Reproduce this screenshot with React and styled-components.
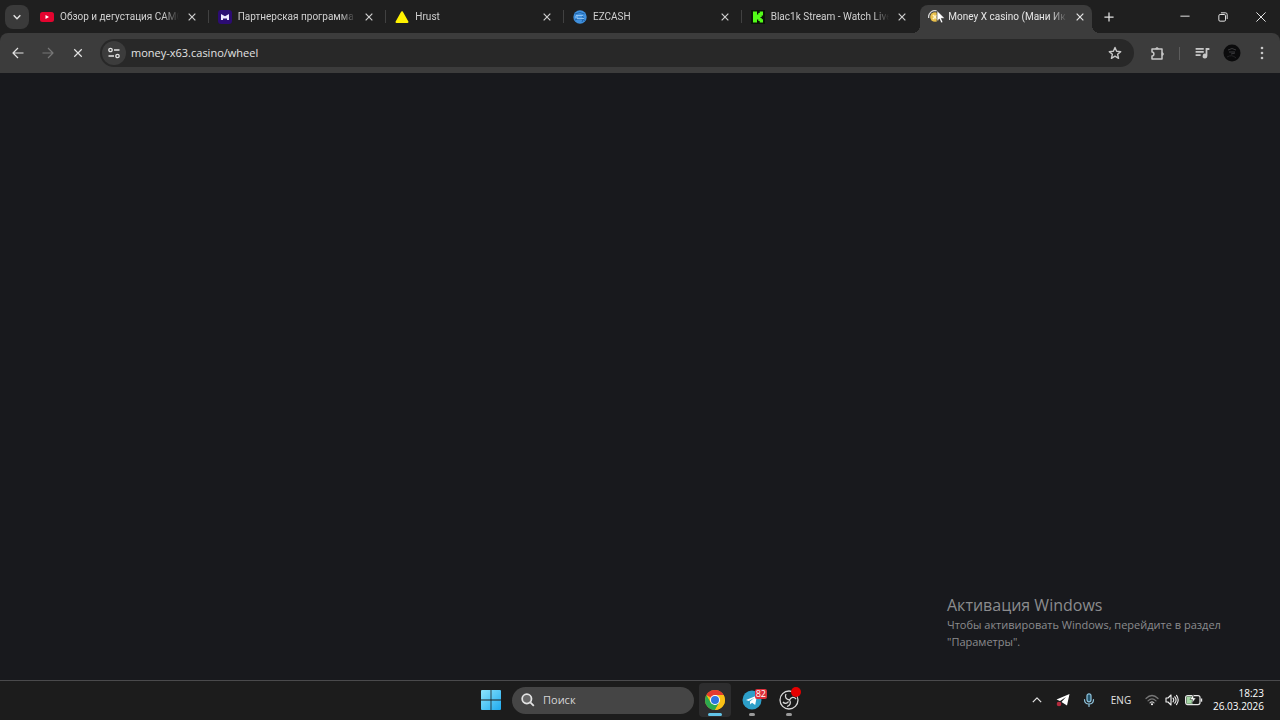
import React, { useState } from 'react'
import styled, { createGlobalStyle } from 'styled-components'

const TABS = [
  { id: 'youtube', title: 'Обзор и дегустация САМО', icon: YoutubeIcon },
  { id: 'partner', title: 'Партнерская программа |', icon: PartnerIcon },
  { id: 'hrust', title: 'Hrust', icon: HrustIcon },
  { id: 'ezcash', title: 'EZCASH', icon: EzcashIcon },
  { id: 'kick', title: 'Blac1k Stream - Watch Live', icon: KickIcon },
  { id: 'money', title: 'Money X casino (Мани Ик', icon: MoneyIcon },
]

const App = () => {
  const [activeTab, setActiveTab] = useState('money')
  const [url, setUrl] = useState('money-x63.casino/wheel')
  const [search, setSearch] = useState('')

  return (
    <Desktop>
      <GlobalStyle />

      <BrowserFrame>
        <TabStrip>
          <TabSearch>
            <TabSearchButton aria-label="Поиск вкладок">
              <Stroke size={10} w={3.5}><path d="M4 8l8 8 8-8" /></Stroke>
            </TabSearchButton>
          </TabSearch>

          <TabList>
            {TABS.map(({ id, title, icon: Icon }) => (
              <Tab key={id} $active={id === activeTab}>
                <TabLabel onClick={() => setActiveTab(id)}>
                  <Favicon><Icon /></Favicon>
                  <TabTitle>{title}</TabTitle>
                </TabLabel>
                <CloseButton aria-label="Закрыть вкладку">
                  <Stroke size={8} w={3.5}><path d="M2 2l20 20M22 2L2 22" /></Stroke>
                </CloseButton>
              </Tab>
            ))}
          </TabList>

          <NewTabButton aria-label="Новая вкладка">
            <Stroke size={10} w={3}><path d="M12 1v22M1 12h22" /></Stroke>
          </NewTabButton>

          <WindowControls>
            <WindowButton aria-label="Свернуть">
              <Stroke size={10} w={2.4}><path d="M1 10h22" /></Stroke>
            </WindowButton>
            <WindowButton aria-label="Восстановить">
              <Stroke size={10} w={2.4}>
                <rect x="2" y="6" width="16" height="16" rx="3" />
                <path d="M7 2h11a4 4 0 0 1 4 4v11" />
              </Stroke>
            </WindowButton>
            <WindowButton aria-label="Закрыть">
              <Stroke size={10} w={2.4}><path d="M1 1l22 22M23 1L1 23" /></Stroke>
            </WindowButton>
          </WindowControls>
        </TabStrip>

        <Toolbar>
          <NavButtons>
            <NavButton aria-label="Назад">
              <Stroke size={12} w={2.4}><path d="M23 12H3M12 2L2 12l10 10" /></Stroke>
            </NavButton>
            <NavButton aria-label="Вперёд" disabled>
              <Stroke size={12} w={2.4}><path d="M1 12h20M12 2l10 10-10 10" /></Stroke>
            </NavButton>
            <NavButton aria-label="Остановить">
              <Stroke size={10} w={2.8}><path d="M3 3l18 18M21 3L3 21" /></Stroke>
            </NavButton>
          </NavButtons>

          <AddressBar>
            <SiteButton aria-label="Сведения о сайте">
              <Stroke size={12} w={2.6}>
                <circle cx="5" cy="6" r="3.4" />
                <path d="M12 6h11M1 18h11" />
                <circle cx="19" cy="18" r="3.4" />
              </Stroke>
            </SiteButton>
            <AddressInput
              aria-label="Адресная строка"
              value={url}
              onChange={(e) => setUrl(e.target.value)}
            />
            <StarButton aria-label="Добавить в закладки">
              <Stroke size={14} w={2.4}>
                <path d="M12 2.5l2.8 6.5 7 .6-5.300 4.600 1.600 6.900-6.100-3.700-6.100 3.700 1.600-6.900L2.200 9.600l7-.6z" />
              </Stroke>
            </StarButton>
          </AddressBar>

          <ToolbarActions>
            <ActionButton aria-label="Расширения">
              <svg width="15" height="15" viewBox="0 0 15 15" fill="none" stroke="currentColor" strokeWidth="1.500" strokeLinejoin="round">
                <path d="M2 3h10v10H2v-3c2.500 0 2.500-4 0-4z" />
                <path d="M5.500 3a1.500 1.500 0 0 1 3 0zM12 6.500a1.500 1.500 0 0 1 0 3z" fill="currentColor" strokeWidth="0.600" />
              </svg>
            </ActionButton>
            <Divider />
            <ActionButton aria-label="Управление мультимедиа">
              <svg width="15" height="15" viewBox="0 0 24 24" fill="currentColor">
                <path d="M1 3h13v2.800H1zM1 8h13v2.800H1zM1 13h8v2.800H1z" />
                <path d="M17 3h6v3.200h-3.200V16a3.800 3.800 0 1 1-2.800-3.600z" />
              </svg>
            </ActionButton>
            <ActionButton aria-label="Профиль">
              <svg width="18" height="18" viewBox="0 0 18 18">
                <circle cx="9" cy="9" r="8.500" fill="#0b0b0c" />
                <path d="M5 6q4-3 8 0M6 8h6M8 10l4-1" stroke="#3a3a3c" fill="none" />
                <path d="M4 13q5-3 9 1" stroke="#232325" fill="none" />
              </svg>
            </ActionButton>
            <ActionButton aria-label="Меню">
              <svg width="14" height="14" viewBox="0 0 14 14" fill="currentColor">
                <circle cx="7" cy="2" r="1.300" />
                <circle cx="7" cy="7" r="1.300" />
                <circle cx="7" cy="12" r="1.300" />
              </svg>
            </ActionButton>
          </ToolbarActions>
        </Toolbar>
      </BrowserFrame>

      <Page>
        <Activation>
          <ActivationTitle>Активация Windows</ActivationTitle>
          <ActivationText>
            Чтобы активировать Windows, перейдите в раздел "Параметры".
          </ActivationText>
        </Activation>
      </Page>

      <Taskbar>
        <TaskCenter>
          <TaskButton aria-label="Пуск"><WindowsIcon /></TaskButton>
          <SearchBox>
            <Stroke size={14} w={3}>
              <circle cx="10" cy="10" r="8" fill="#696969" />
              <path d="M16 16l6 6" />
            </Stroke>
            <SearchInput
              aria-label="Поиск"
              placeholder="Поиск"
              value={search}
              onChange={(e) => setSearch(e.target.value)}
            />
          </SearchBox>
          <TaskButton aria-label="Chrome" $open $active><ChromeIcon /></TaskButton>
          <TaskButton aria-label="Telegram" $open>
            <TelegramIcon />
            <Badge>82</Badge>
          </TaskButton>
          <TaskButton aria-label="OBS" $open>
            <ObsIcon />
            <RecordDot />
          </TaskButton>
        </TaskCenter>

        <Tray>
          <TrayButton aria-label="Скрытые значки">
            <Stroke size={10} w={3}><path d="M2 17L12 7l10 10" /></Stroke>
          </TrayButton>
          <TrayButton aria-label="Telegram">
            <svg width="14" height="14" viewBox="0 0 14 14">
              <path d="M13.500 1L.5 6.500 4 8l6-4-4.500 5L11 12.500z" fill="#fff" />
              <circle cx="3" cy="11" r="2.300" fill="#b32a3c" />
            </svg>
          </TrayButton>
          <TrayButton aria-label="Микрофон">
            <svg width="12" height="14" viewBox="0 0 12 14" fill="none" stroke="#8fc3dc" strokeWidth="1.200" strokeLinecap="round">
              <rect x="4" y="0.800" width="4" height="8" rx="2" fill="#24566e" />
              <path d="M1.500 6.500c0 6 9 6 9 0M6 11v2.400" />
            </svg>
          </TrayButton>
          <LangButton>ENG</LangButton>
          <StatusButton aria-label="Сеть, звук и питание">
            <svg width="14" height="12" viewBox="0 0 14 12" fill="none" stroke="#777" strokeWidth="1.200" strokeLinecap="round">
              <path d="M1 4.500q6-6 12 0M3 6.800q4-4 8 0" />
              <path d="M5 8.800q2-2 4 0" stroke="#bbb" />
              <circle cx="7" cy="10.300" r="1" fill="#fff" stroke="none" />
            </svg>
            <svg width="14" height="12" viewBox="0 0 14 12" fill="none" stroke="#f2f2f2" strokeWidth="1.100" strokeLinecap="round" strokeLinejoin="round">
              <path d="M1 4h2l3-3v10L3 8H1zM8 4.200q1.500 1.800 0 3.600M9.800 2.800q2.600 3.200 0 6.400M11.500 1.400q3.400 4.600 0 9.200" />
            </svg>
            <svg width="18" height="12" viewBox="0 0 18 12">
              <rect x="0.600" y="1.600" width="14.400" height="9" rx="2" fill="none" stroke="#e8e8e8" strokeWidth="1.200" />
              <path d="M1.500 2.500h7l-1 7.200h-6z" fill="#a5d6a5" />
              <path d="M16.500 4.500v3.200" stroke="#e8e8e8" strokeWidth="1.400" />
              <path d="M8.500 0L5 5.500h2.500L7 9l4-5H8.500z" fill="#fff" stroke="#1c1c1c" strokeWidth="0.500" />
            </svg>
          </StatusButton>
          <Clock>
            <span>18:23</span>
            <span>26.03.2026</span>
          </Clock>
        </Tray>
      </Taskbar>
    </Desktop>
  )
}

export default App

const Stroke = ({ size, w, children }) => (
  <svg
    width={size}
    height={size}
    viewBox="0 0 24 24"
    fill="none"
    stroke="currentColor"
    strokeWidth={w}
    strokeLinejoin="round"
  >
    {children}
  </svg>
)

function YoutubeIcon() {
  return (
    <svg width="14" height="14" viewBox="0 0 14 14">
      <rect y="2" width="14" height="10" rx="2.500" fill="#e3042f" />
      <path d="M5.500 5v4L9 7z" fill="#fff" />
    </svg>
  )
}

function PartnerIcon() {
  return (
    <svg width="14" height="14" viewBox="0 0 14 14">
      <rect width="14" height="14" rx="3" fill="#2c0c73" />
      <path d="M3 4l4 2.200L11 4v6H9V8.500H5V10H3z" fill="#efe6ff" />
    </svg>
  )
}

function HrustIcon() {
  return (
    <svg width="14" height="14" viewBox="0 0 14 14">
      <path d="M7 2.200L12.500 12h-11z" fill="#fff200" stroke="#fff200" strokeWidth="2" strokeLinejoin="round" />
    </svg>
  )
}

function EzcashIcon() {
  return (
    <svg width="14" height="14" viewBox="0 0 14 14">
      <circle cx="7" cy="7" r="6.700" fill="#3f8fdc" />
      <path d="M2 4q5-3 9.500 0M2 10q5-3 10 .5M9 5q3 3 0 7" stroke="#1d62a8" fill="none" />
      <path d="M3 5.500h7M4 8.500h7M2 7h3" stroke="#a5d2fa" strokeWidth="0.800" />
    </svg>
  )
}

function KickIcon() {
  return (
    <svg width="14" height="14" viewBox="0 0 14 14">
      <rect width="14" height="14" fill="#0a1408" />
      <path d="M2 1.500h4v3h1.300V3h1.400V1.500H12v4h-1.300V7H9.500v1h1.200v1.300H12v3.200H8.700V11H7.300V9.500H6v3H2z" fill="#53fc18" />
    </svg>
  )
}

/* favicon with the loading ring, the pointer rests on top of it */
function MoneyIcon() {
  return (
    <>
      <svg width="14" height="14" viewBox="0 0 14 14">
        <circle cx="7" cy="7" r="4.800" fill="#e9c04c" />
        <path d="M5 5l4 4M9 5L5 9" stroke="#fff3c2" strokeWidth="1.600" />
        <path d="M.7 8A6.300 6.300 0 0 1 9 1" stroke="#d6d6d6" strokeWidth="1.300" fill="none" />
      </svg>
      <Pointer width="10" height="14" viewBox="0 0 10 14">
        <path d="M1 .5v10.800l2.400-2.200 1.700 3.900 1.900-.8-1.700-3.800H9z" fill="#fff" stroke="#222" strokeWidth="0.600" />
      </Pointer>
    </>
  )
}

function WindowsIcon() {
  return (
    <svg width="20" height="20" viewBox="0 0 20 20">
      <defs>
        <linearGradient id="win" x1="0" y1="0" x2="20" y2="20" gradientUnits="userSpaceOnUse">
          <stop offset="0" stopColor="#8ee4fb" />
          <stop offset="1" stopColor="#1eaaf0" />
        </linearGradient>
      </defs>
      <path d="M0 1q0-1 1-1h8.600v9.600H0zM10.400 0H19q1 0 1 1v8.600h-9.600zM0 10.400h9.600V20H1q-1 0-1-1zM10.400 10.400H20V19q0 1-1 1h-8.600z" fill="url(#win)" />
    </svg>
  )
}

function ChromeIcon() {
  return (
    <svg width="20" height="20" viewBox="0 0 20 20">
      <circle cx="10" cy="10" r="10" fill="#fbc116" />
      <path d="M10 10L1.340 5A10 10 0 0 1 18.660 5z" fill="#e33b2e" />
      <path d="M1.340 5A10 10 0 0 0 10 20l4.330-7.500L10 10 5.670 12.500z" fill="#2da94f" />
      <path d="M10 5h8.660A10 10 0 0 1 10 20l4.330-7.500z" fill="#fbc116" />
      <circle cx="10" cy="10" r="5" fill="#fff" />
      <circle cx="10" cy="10" r="4" fill="#2f74e0" />
    </svg>
  )
}

function TelegramIcon() {
  return (
    <svg width="20" height="20" viewBox="0 0 20 20">
      <circle cx="10" cy="10" r="9.500" fill="#2d9fc9" />
      <path d="M4 10l11-4.500-1.800 9.500-3.200-2.300-1.700 1.700-.4-3 4.500-3.700-5.600 3.400z" fill="#fff" />
    </svg>
  )
}

function ObsIcon() {
  return (
    <svg width="20" height="20" viewBox="0 0 20 20" fill="none" stroke="#d8d8d8" strokeWidth="1.300">
      <circle cx="10" cy="10" r="9" fill="#1b1b1b" />
      <path d="M7 4c-1.500 3 0 5.500 3.500 6M10.500 10c1.500-3 4.500-3.500 6.500-1M10.500 10c2 3 .5 5.500-2.500 6.500M4 12c1.500 2 4.500 1.500 5.500-.5" />
    </svg>
  )
}

const GlobalStyle = createGlobalStyle`
  * {
    box-sizing: border-box;
  }

  body {
    margin: 0;
    background: #18191d;
    font-family: 'Open Sans', 'Noto Sans', sans-serif;
  }

  button, input {
    font-family: inherit;
    color: inherit;
    background: none;
    border: none;
    padding: 0;
    outline: none;
  }

  svg {
    display: block;
    flex-shrink: 0;
  }
`

const Desktop = styled.div`
  display: flex;
  flex-direction: column;
  min-height: 100vh;
  color: #e3e3e3;
`

const BrowserFrame = styled.header`
  background: #1f1f1f;
`

const TabStrip = styled.div`
  display: flex;
  height: 33px;
`

const TabSearch = styled.div`
  display: flex;
  align-items: center;
  width: 32px;
  padding-left: 5px;
`

const IconButton = styled.button`
  display: flex;
  align-items: center;
  justify-content: center;
  flex-shrink: 0;
`

const TabSearchButton = styled(IconButton)`
  width: 24px;
  height: 24px;
  border-radius: 8px;
  background: #3a3a3a;
`

const TabList = styled.nav`
  display: flex;
  flex: 1;
  gap: 6px;
  min-width: 0;
  padding-top: 5px;
`

const Tab = styled.div`
  position: relative;
  display: flex;
  flex: 1;
  align-items: center;
  gap: 6px;
  min-width: 0;
  padding: 0 5px 4px 8px;
  border-radius: 8px 8px 0 0;
  background: ${({ $active }) => ($active ? '#3c3c3c' : 'transparent')};
  color: ${({ $active }) => ($active ? '#e6e6e6' : '#d0d0d0')};

  /* divider between tabs, or the flared feet of the active one */
  &::before,
  &::after {
    content: '';
    position: absolute;
    bottom: 0;
    width: 8px;
    height: 8px;
    display: ${({ $active }) => ($active ? 'block' : 'none')};
  }

  &::before {
    left: -8px;
    background: radial-gradient(circle at 0 0, transparent 8px, #3c3c3c 8px);
  }

  &::after {
    right: -8px;
    background: radial-gradient(circle at 100% 0, transparent 8px, #3c3c3c 8px);
  }

  &:not(:nth-last-child(-n + 2))::after {
    display: block;
    right: -5px;
    bottom: 10px;
    width: 1px;
    height: 13px;
    background: #414141;
  }
`

const TabLabel = styled.button`
  display: flex;
  flex: 1;
  align-items: center;
  gap: 6px;
  min-width: 0;
`

const Favicon = styled.span`
  position: relative;
  flex-shrink: 0;
`

const Pointer = styled.svg`
  position: absolute;
  top: 0;
  left: 8px;
`

const TabTitle = styled.span`
  flex: 1;
  overflow: hidden;
  font-family: Roboto, 'Open Sans', sans-serif;
  font-size: 10px;
  line-height: 16px;
  text-align: left;
  white-space: nowrap;
  mask-image: linear-gradient(to left, transparent, #000 16px);
`

const CloseButton = styled(IconButton)`
  width: 14px;
  height: 16px;
`

const NewTabButton = styled(IconButton)`
  width: 34px;
`

const WindowControls = styled.div`
  display: flex;
  margin-left: 40px;
`

const WindowButton = styled(IconButton)`
  width: 38px;
`

const Toolbar = styled.div`
  display: flex;
  align-items: center;
  height: 40px;
  padding: 0 3px;
  border-radius: 8px 8px 0 0;
  background: #3c3c3c;
`

const NavButtons = styled.div`
  display: flex;
  margin-right: 7px;
`

const NavButton = styled(IconButton)`
  width: 30px;
  height: 28px;

  &:disabled {
    color: #777;
  }
`

const AddressBar = styled.div`
  display: flex;
  flex: 1;
  align-items: center;
  height: 28px;
  padding: 0 12px 0 2px;
  border-radius: 14px;
  background: #282828;
`

const SiteButton = styled(IconButton)`
  width: 24px;
  height: 24px;
  border-radius: 50%;
  background: #3c3c3c;
`

const AddressInput = styled.input`
  flex: 1;
  min-width: 0;
  margin-left: 5px;
  font-size: 11px;
  line-height: 16px;
`

const StarButton = styled(IconButton)`
  color: #c7c7c7;
`

const ToolbarActions = styled.div`
  display: flex;
  align-items: center;
  margin-left: 8px;
`

const ActionButton = styled(IconButton)`
  width: 30px;
  height: 28px;
  color: #c7c7c7;
`

const Divider = styled.span`
  width: 1px;
  height: 13px;
  margin: 0 7px;
  background: #5c5c5c;
`

const Page = styled.main`
  display: flex;
  flex: 1;
  align-items: flex-end;
  justify-content: flex-end;
  padding: 0 48px 30px 0;
  background: #18191d;
`

const Activation = styled.section`
  width: 285px;
  color: #8b8c8e;
`

const ActivationTitle = styled.div`
  font-size: 16px;
  line-height: 22px;
`

const ActivationText = styled.div`
  font-size: 11px;
  line-height: 17px;
`

const Taskbar = styled.footer`
  display: grid;
  grid-template-columns: 1fr auto 1fr;
  align-items: center;
  height: 40px;
  padding-bottom: 1px;
  border-top: 1px solid #4a4a4c;
  background: #1c1c1c;
`

const TaskCenter = styled.div`
  display: flex;
  grid-column: 2;
  align-items: center;
  gap: 5px;
`

const TaskButton = styled(IconButton)`
  position: relative;
  width: 32px;
  height: 34px;
  border-radius: 4px;
  background: ${({ $active }) => ($active ? '#2d2d2e' : 'transparent')};

  &::after {
    content: '';
    position: absolute;
    bottom: 1px;
    width: ${({ $active }) => ($active ? '14px' : '6px')};
    height: 3px;
    border-radius: 2px;
    display: ${({ $open }) => ($open ? 'block' : 'none')};
    background: ${({ $active }) => ($active ? '#62c4e8' : '#9a9a9a')};
  }
`

const Badge = styled.span`
  position: absolute;
  top: 6px;
  right: 1px;
  padding: 0 1px;
  border-radius: 2px;
  background: #dc2f3a;
  color: #fff;
  font-size: 9px;
  line-height: 10px;
`

const RecordDot = styled.span`
  position: absolute;
  top: 4px;
  right: 4px;
  width: 10px;
  height: 10px;
  border-radius: 50%;
  background: #e60000;
`

const SearchBox = styled.label`
  display: flex;
  align-items: center;
  gap: 8px;
  width: 182px;
  height: 27px;
  padding: 0 9px;
  border-radius: 14px;
  background: #454545;
`

const SearchInput = styled.input`
  flex: 1;
  min-width: 0;
  font-size: 11px;
  line-height: 16px;

  &::placeholder {
    color: #d5d5d5;
    opacity: 1;
  }
`

const Tray = styled.div`
  display: flex;
  align-items: center;
  justify-content: flex-end;
  padding-right: 16px;
`

const TrayButton = styled(IconButton)`
  width: 26px;
  height: 30px;
`

const LangButton = styled(IconButton)`
  width: 38px;
  font-size: 10px;
`

const StatusButton = styled(IconButton)`
  gap: 6px;
  margin: 0 5px;
`

const Clock = styled.time`
  display: flex;
  flex-direction: column;
  align-items: flex-end;
  width: 56px;
  color: #fff;
  font-size: 10px;
  line-height: 13px;
  white-space: nowrap;
`
